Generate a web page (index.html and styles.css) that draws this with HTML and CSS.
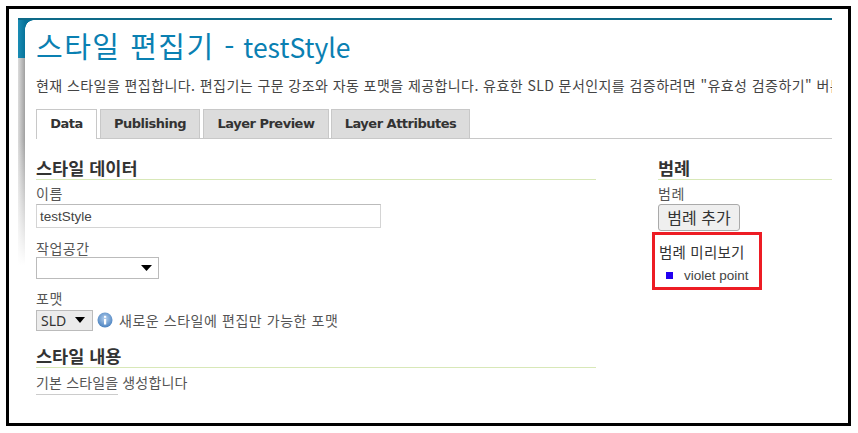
FILE: index.html
```html
<!DOCTYPE html>
<html lang="ko">
<head>
<meta charset="utf-8">
<title>스타일 편집기</title>
<link rel="stylesheet" href="styles.css">
</head>
<body>
<div class="frame">
  <div class="page">
    <div class="sidebar"><div class="side-teal"></div><div class="side-gray"></div></div>
    <main class="content">
      <h1 class="title"><span class="title-ko">스타일 편집기 -</span> testStyle</h1>
      <p class="intro">현재 스타일을 편집합니다. 편집기는 구문 강조와 자동 포맷을 제공합니다. 유효한 SLD 문서인지를 검증하려면 "유효성 검증하기" 버튼을 누르세요.</p>
      <nav class="tabs">
        <span class="tab tab-data active">Data</span>
        <span class="tab tab-pub">Publishing</span>
        <span class="tab tab-prev">Layer Preview</span>
        <span class="tab tab-attr">Layer Attributes</span>
      </nav>
      <div class="columns">
        <section class="left">
          <h2 class="heading">스타일 데이터</h2>
          <label class="label">이름</label>
          <div class="input">testStyle</div>
          <label class="label label-ws">작업공간</label>
          <div class="select-ws"><svg class="arrow" width="11" height="6" viewBox="0 0 11 6"><path d="M0 0h11L5.5 6z"/></svg></div>
          <label class="label label-fmt">포맷</label>
          <div class="format-row">
            <div class="select-fmt">SLD<svg class="arrow" width="10" height="6" viewBox="0 0 10 6"><path d="M0 0h10L5 6z"/></svg></div>
            <svg class="info" width="16" height="16" viewBox="0 0 16 16">
              <defs><radialGradient id="g" cx="50%" cy="40%" r="60%"><stop offset="0" stop-color="#b5d0ee"/><stop offset="1" stop-color="#4a82c0"/></radialGradient></defs>
              <circle cx="8" cy="8" r="7.5" fill="url(#g)"/>
              <rect x="7" y="7" width="2.2" height="5.5" fill="#fff"/>
              <rect x="7" y="3.8" width="2.2" height="2" fill="#fff"/>
            </svg>
            <span class="note">새로운 스타일에 편집만 가능한 포맷</span>
          </div>
          <h2 class="heading heading-content">스타일 내용</h2>
          <div class="generate"><span class="link">기본 스타일을</span> 생성합니다</div>
        </section>
        <aside class="right">
          <h2 class="heading">범례</h2>
          <label class="label">범례</label>
          <button class="btn" type="button">범례 추가</button>
          <div class="preview">
            <div class="preview-title">범례 미리보기</div>
            <div class="preview-row"><span class="swatch"></span><span class="legend">violet point</span></div>
          </div>
        </aside>
      </div>
    </main>
  </div>
</div>
</body>
</html>
```
FILE: styles.css
```css
* { box-sizing: border-box; }
html, body { margin: 0; padding: 0; background: #fff; }
body { width: 858px; height: 433px; overflow: hidden; font-family: "Noto Sans CJK KR", "Noto Sans", sans-serif; color: #444; }
.frame { margin: 6px 7px 0 6px; width: 845px; height: 420px; border: 3px solid #000; padding: 9px 16px 0 9px; overflow: hidden; }
.page { display: flex; height: 399px; border-top: 2px solid #0e6a88; overflow: hidden; }
.sidebar { width: 7px; flex: none; display: flex; flex-direction: column; }
.side-teal { height: 38px; background: linear-gradient(to right, #1a8db5, #07739a); }
.side-gray { height: 207px; background: linear-gradient(to bottom, rgba(255,255,255,0) 40%, #fff 100%), linear-gradient(to right, #dcdcdc, #a0a0a0); }
.content { flex: 1; min-width: 0; position: relative; padding-left: 11px; }
.content::before { content: ""; position: absolute; left: 0; top: 0; width: 9px; height: 9px; background: radial-gradient(circle at 100% 100%, transparent 8.5px, #07739a 9px); }
.title { margin: 6px 0 0; font-size: 26.5px; line-height: 38px; font-weight: 400; color: #0a80b2; white-space: nowrap; }
.title-ko { font-size: 29px; letter-spacing: 1.5px; }
.intro { margin: 9px 0 0; font-size: 14px; line-height: 20px; letter-spacing: 0.43px; white-space: nowrap; overflow: hidden; color: #444; }
.tabs { display: flex; margin-top: 14px; height: 30px; border-bottom: 1px solid #c8c8c8; }
.tab { display: block; height: 29px; background: #dcdcdc; border: 1px solid #c8c8c8; border-bottom: 0; font: 700 13px/28px "DejaVu Sans", Verdana, sans-serif; letter-spacing: -0.5px; color: #333; text-align: center; }
.tab-data { width: 61px; }
.tab-pub { width: 100px; margin-left: 3px; }
.tab-prev { width: 126px; margin-left: 3px; }
.tab-attr { width: 139px; margin-left: 2px; }
.tab.active { background: #fff; height: 30px; }
.columns { display: flex; margin-top: 19px; }
.left { width: 560px; flex: none; }
.right { width: 174px; flex: none; margin-left: 62px; }
.heading { margin: 0; height: 22px; font-size: 17.5px; line-height: 20px; font-weight: 700; color: #333; border-bottom: 1px solid #d8e8b8; }
.label { display: block; font-size: 14px; line-height: 18px; margin-top: 4px; letter-spacing: 0.5px; color: #555; }
.input { width: 345px; height: 24px; margin-top: 2px; border: 1px solid #d4d4d4; border-top-color: #bbb; font: 13.5px/23px "Liberation Sans", sans-serif; padding-left: 3px; color: #444; }
.label-ws { margin-top: 11px; }
.select-ws { width: 123px; height: 22px; margin-top: 0; border: 1px solid #bbb; display: flex; align-items: center; justify-content: flex-end; padding-right: 6px; }
.arrow { fill: #000; flex: none; }
.label-fmt { margin-top: 10px; }
.format-row { display: flex; align-items: center; margin-top: 2px; height: 22px; }
.select-fmt { width: 57px; height: 21px; background: #ececec; border: 1px solid #bbb; font: 14px/19px "Noto Sans", sans-serif; padding: 0 7px 0 4px; display: flex; align-items: center; justify-content: space-between; color: #333; }
.info { margin-left: 4px; flex: none; }
.note { font-size: 14px; margin-left: 6px; line-height: 18px; letter-spacing: 0.55px; color: #555; }
.heading-content { margin-top: 15px; }
.generate { margin-top: 5px; font-size: 14px; line-height: 18px; letter-spacing: 0.15px; color: #555; }
.link { display: inline-block; border-bottom: 1px solid #ccc; padding-bottom: 3px; }
.btn { display: block; width: 82px; height: 27px; margin-top: 2px; padding: 0; background: #efefef; border: 1px solid #aaa; border-radius: 3px; font: 16px/23px "Noto Sans CJK KR", sans-serif; color: #333; }
.preview { margin: 1px 0 0 -6px; width: 110px; height: 58px; border: 3px solid #ed1c24; padding: 7px 0 0 4px; }
.preview-title { font-size: 14.5px; line-height: 20px; letter-spacing: 0.2px; color: #333; }
.preview-row { display: flex; align-items: center; margin-top: 6px; height: 16px; }
.swatch { width: 7px; height: 7px; background: #2200f0; margin: -1px 0 0 7px; flex: none; }
.legend { margin-left: 11px; font: 13.5px/16px "Liberation Sans", sans-serif; color: #444; }
```
